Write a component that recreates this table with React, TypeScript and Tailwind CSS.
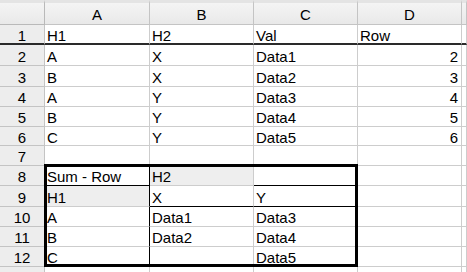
import React from 'react';

type Cell = {
  text?: string;
  right?: boolean;
  cls?: string;
};

const font = { fontFamily: '"Liberation Sans", Arial, sans-serif' };

const cols = ['A', 'B', 'C', 'D', ''];

const gridCls =
  'col-start-1 row-start-1 grid grid-cols-[45px_105px_104px_104px_104px_1fr] grid-rows-[25px_20px_21px_21px_20px_20px_19px_20px_20px_21px_20px_20px_20px_20px]';

// sheet body, row by row (A..E)
const rows: Cell[][] = [
  [{ text: 'H1' }, { text: 'H2' }, { text: 'Val' }, { text: 'Row' }, {}],
  [{ text: 'A' }, { text: 'X' }, { text: 'Data1' }, { text: '2', right: true }, {}],
  [{ text: 'B' }, { text: 'X' }, { text: 'Data2' }, { text: '3', right: true }, {}],
  [{ text: 'A' }, { text: 'Y' }, { text: 'Data3' }, { text: '4', right: true }, {}],
  [{ text: 'B' }, { text: 'Y' }, { text: 'Data4' }, { text: '5', right: true }, {}],
  [{ text: 'C' }, { text: 'Y' }, { text: 'Data5' }, { text: '6', right: true }, {}],
  [{}, {}, {}, {}, {}],
  [
    { text: 'Sum - Row', cls: 'border-r-black border-b-black' },
    { text: 'H2', cls: 'bg-[#eeeeee]' },
    { cls: 'border-b-black' },
    {},
    {},
  ],
  [
    { text: 'H1', cls: 'bg-[#eeeeee] border-r-black' },
    { text: 'X', cls: 'border-b-black' },
    { text: 'Y', cls: 'border-b-black' },
    {},
    {},
  ],
  [{ text: 'A', cls: 'border-r-black' }, { text: 'Data1' }, { text: 'Data3' }, {}, {}],
  [{ text: 'B', cls: 'border-r-black' }, { text: 'Data2' }, { text: 'Data4' }, {}, {}],
  [{ text: 'C', cls: 'border-r-black' }, {}, { text: 'Data5' }, {}, {}],
  [{}, {}, {}, {}, {}],
];

export default function App() {
  return (
    <div className="grid w-[467px] h-[272px] overflow-hidden bg-white text-black" style={font}>
      <div className={gridCls}>
        {/* column headers */}
        <div className="border-t-[3px] border-t-[#e4e4e4] border-r border-b border-[#b9b9b9] bg-gradient-to-b from-[#f4f4f4] to-[#e9e9e9]" />
        {cols.map((c, i) => (
          <div
            key={i}
            className="flex items-center justify-center border-t-[3px] border-t-[#e4e4e4] border-r border-b border-[#c4c4c4] bg-gradient-to-b from-[#f4f4f4] to-[#e9e9e9] text-[15px] leading-none pt-[1px]"
          >
            {c}
          </div>
        ))}

        {rows.map((row, r) => {
          const frozen = r === 0 ? 'border-b-2 border-b-[#2a2a2a]' : '';
          return (
            <React.Fragment key={r}>
              <div
                className={`flex items-center justify-center border-r border-b border-[#c4c4c4] bg-[#ededed] text-[15px] leading-none pt-[2px] ${frozen}`}
              >
                {r + 1}
              </div>
              {row.map((cell, c) => (
                <div
                  key={c}
                  className={`flex items-center overflow-hidden whitespace-nowrap border-r border-b border-[#cdcdcd] px-[2px] text-[15px] leading-none pt-[2px] ${
                    cell.right ? 'justify-end pr-[3px]' : ''
                  } ${cell.cls ?? ''} ${frozen}`}
                >
                  {cell.text}
                </div>
              ))}
            </React.Fragment>
          );
        })}
      </div>

      {/* pivot table outline, laid over the same grid */}
      <div className={`${gridCls} pointer-events-none`}>
        <div className="col-start-2 col-end-5 row-start-9 row-end-14 -mt-[2px] -ml-[1px] border-[3px] border-black" />
      </div>
    </div>
  );
}
